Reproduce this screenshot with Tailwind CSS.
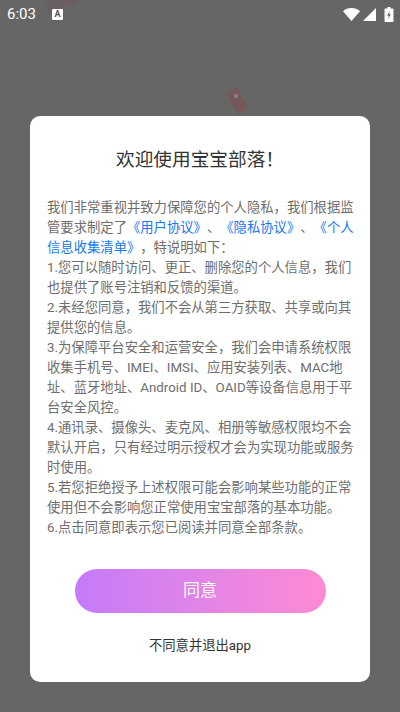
<!DOCTYPE html>
<html lang="zh">
<head>
    <meta charset="UTF-8">
    <meta name="viewport" content="width=device-width, initial-scale=1.0">
    <title>宝宝部落</title>
    <script src="https://cdn.jsdelivr.net/npm/@tailwindcss/browser@4"></script>
</head>
<body class="bg-[#666666] font-['Roboto','Noto_Sans_CJK_SC',sans-serif]">
<div class="relative w-[400px] h-[712px] overflow-hidden flex flex-col">
    <!-- faint shapes of the page behind the dimmed layer -->
    <svg class="absolute left-[40px] top-0" width="50" height="30" viewBox="0 0 50 30">
        <path d="M4 0h36l-6 5-8 2-6 6-3 7-5-3-4-9z" fill="#6b6061"/>
    </svg>
    <svg class="absolute left-[226px] top-[85px]" width="24" height="32" viewBox="0 0 24 32">
        <path d="M1 10 11 1l11 22-10 7z" fill="#75595a"/>
        <circle cx="10" cy="11" r="2" fill="#8d8584"/>
    </svg>

    <!-- status bar -->
    <div class="relative flex items-center h-[28px] pl-[7px] pr-[6px] text-white">
        <span class="text-[15px] leading-[28px]">6:03</span>
        <span class="ml-[16px] flex items-center justify-center w-[11px] h-[11px] bg-white rounded-[1px] text-[#555] text-[9px] font-bold leading-none">A</span>
        <div class="ml-auto flex items-center">
            <svg width="17" height="13" viewBox="0 0 17 13"><path d="M0 3.200C2.300 1.200 5.200 0 8.500 0s6.200 1.200 8.500 3.200L8.500 13z" fill="#fff"/></svg>
            <svg width="13" height="13" viewBox="0 0 13 13" class="ml-[3px]"><path d="M13 0v13H0z" fill="#fff"/></svg>
            <svg width="10" height="15" viewBox="0 0 9 15" class="ml-[8px]"><path fill-rule="evenodd" d="M3 0h3v1.500h2a1 1 0 0 1 1 1V14a1 1 0 0 1-1 1H1a1 1 0 0 1-1-1V2.500a1 1 0 0 1 1-1h2zM5.300 4 2.600 8.800h1.700L3.700 12l2.700-4.800H4.700z" fill="#fff"/></svg>
        </div>
    </div>

    <!-- dialog -->
    <div class="relative mt-[88px] mx-[30px] h-[565.500px] bg-white rounded-[10px] px-[17px] flex flex-col">
        <h1 class="mt-[32px] text-center text-[18.67px] leading-[24px] text-[#333333]">欢迎使用宝宝部落！</h1>
        <p class="mt-[26px] text-[13.33px] leading-[20px] text-[#6e6e6e] whitespace-nowrap [text-spacing-trim:space-all]">
            我们非常重视并致力保障您的个人隐私，我们根据监<br>
            管要求制定了<span class="text-[#1677f0]">《用户协议》</span>、<span class="text-[#1677f0]">《隐私协议》</span>、<span class="text-[#1677f0]">《个人<br>信息收集清单》</span>，特说明如下：<br>
            1.您可以随时访问、更正、删除您的个人信息，我们<br>
            也提供了账号注销和反馈的渠道。<br>
            2.未经您同意，我们不会从第三方获取、共享或向其<br>
            提供您的信息。<br>
            3.为保障平台安全和运营安全，我们会申请系统权限<br>
            收集手机号、IMEI、IMSI、应用安装列表、MAC地<br>
            址、蓝牙地址、Android ID、OAID等设备信息用于平<br>
            台安全风控。<br>
            4.通讯录、摄像头、麦克风、相册等敏感权限均不会<br>
            默认开启，只有经过明示授权才会为实现功能或服务<br>
            时使用。<br>
            5.若您拒绝授予上述权限可能会影响某些功能的正常<br>
            使用但不会影响您正常使用宝宝部落的基本功能。<br>
            6.点击同意即表示您已阅读并同意全部条款。
        </p>
        <button class="mt-[31px] mx-[27.500px] h-[44px] rounded-full bg-gradient-to-r from-[#c47bfa] to-[#ff8ad2] text-white text-[17px] shrink-0">同意</button>
        <button class="mt-[23px] text-center text-[13.33px] leading-[20px] text-[#333333]">不同意并退出app</button>
    </div>
</div>
</body>
</html>
